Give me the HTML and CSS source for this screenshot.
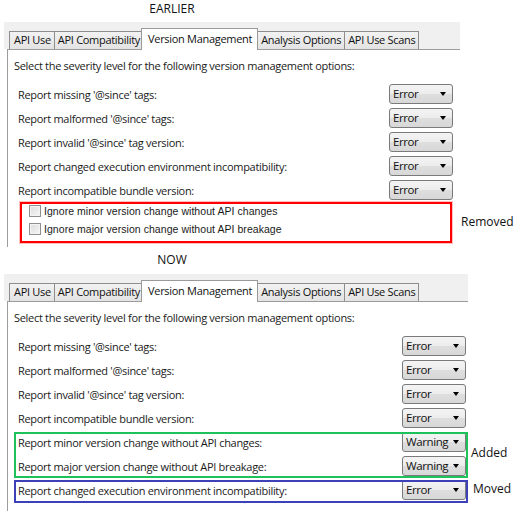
FILE: index.html
```html
<!DOCTYPE html>
<html>
<head>
<meta charset="utf-8">
<link rel="stylesheet" href="styles.css">
</head>
<body>
<div class="caption caption-earlier">EARLIER</div>
<div class="window window-top">
  <div class="tabs">
    <div class="tab">API Use</div>
    <div class="tab">API Compatibility</div>
    <div class="tab selected">Version Management</div>
    <div class="tab">Analysis Options</div>
    <div class="tab">API Use Scans</div>
  </div>
  <div class="panel">
    <div class="intro">Select the severity level for the following version management options:</div>
    <div class="rows">
      <div class="row"><span>Report missing '@since' tags:</span><div class="combo">Error<i></i></div></div>
      <div class="row"><span>Report malformed '@since' tags:</span><div class="combo">Error<i></i></div></div>
      <div class="row"><span>Report invalid '@since' tag version:</span><div class="combo">Error<i></i></div></div>
      <div class="row"><span>Report changed execution environment incompatibility:</span><div class="combo">Error<i></i></div></div>
      <div class="row"><span>Report incompatible bundle version:</span><div class="combo">Error<i></i></div></div>
    </div>
    <div class="checks">
      <label class="check"><span class="box"></span>Ignore minor version change without API changes</label>
      <label class="check"><span class="box"></span>Ignore major version change without API breakage</label>
    </div>
  </div>
  <div class="mark mark-red"></div>
  <div class="note note-removed">Removed</div>
</div>
<div class="caption caption-now">NOW</div>
<div class="window window-bottom">
  <div class="tabs">
    <div class="tab">API Use</div>
    <div class="tab">API Compatibility</div>
    <div class="tab selected">Version Management</div>
    <div class="tab">Analysis Options</div>
    <div class="tab">API Use Scans</div>
  </div>
  <div class="panel">
    <div class="intro">Select the severity level for the following version management options:</div>
    <div class="rows">
      <div class="row"><span>Report missing '@since' tags:</span><div class="combo">Error<i></i></div></div>
      <div class="row"><span>Report malformed '@since' tags:</span><div class="combo">Error<i></i></div></div>
      <div class="row"><span>Report invalid '@since' tag version:</span><div class="combo">Error<i></i></div></div>
      <div class="row"><span>Report incompatible bundle version:</span><div class="combo">Error<i></i></div></div>
      <div class="row"><span>Report minor version change without API changes:</span><div class="combo">Warning<i></i></div></div>
      <div class="row"><span>Report major version change without API breakage:</span><div class="combo">Warning<i></i></div></div>
      <div class="row"><span>Report changed execution environment incompatibility:</span><div class="combo">Error<i></i></div></div>
    </div>
  </div>
  <div class="mark mark-green"></div>
  <div class="mark mark-blue"></div>
  <div class="note note-added">Added</div>
  <div class="note note-moved">Moved</div>
</div>
</body>
</html>
```
FILE: styles.css
```css
html, body {
  margin: 0;
  padding: 0;
  background: #fff;
}
body {
  width: 516px;
  height: 511px;
  overflow: hidden;
  font-family: "Open Sans", "Noto Sans", sans-serif;
  font-size: 11px;
  letter-spacing: -0.3px;
  color: #1a1a1a;
}
.caption {
  width: 344px;
  text-align: center;
  font-size: 12px;
  line-height: 18px;
  letter-spacing: 0;
  color: #111;
}
.caption-earlier {
  height: 22px;
}
.caption-now {
  padding-top: 4px;
  height: 23px;
}
.window {
  position: relative;
  margin-left: 4px;
}
.window-top { width: 456px; }
.window-bottom { width: 464px; }

.tabs {
  display: flex;
  align-items: flex-end;
  height: 27px;
  padding-left: 5px;
  background: #f0f0f0;
  position: relative;
  z-index: 2;
}
.tab {
  height: 17px;
  line-height: 16px;
  padding: 0 3px 0 3px;
  border: 1px solid #8d8d8d;
  border-bottom: none;
  margin-right: -1px;
  background: linear-gradient(#f2f2f2, #e3e3e3);
  font-size: 11px;
  color: #111;
  white-space: nowrap;
}
.tab:first-child {
  padding-left: 4px;
}
.tab.selected {
  height: 21px;
  line-height: 19px;
  padding: 0 5px 0 6px;
  margin: 0 -1px -1px -2px;
  background: #fff;
  border-color: #9a9a9a;
  position: relative;
  z-index: 3;
}

.panel {
  margin-left: 3px;
  border-left: 1px solid #9c9c9c;
  border-top: 1px solid #9c9c9c;
  background: #fff;
  padding: 8px 7px 9px 6px;
  position: relative;
  z-index: 1;
}
.window-bottom .panel {
  padding-right: 2px;
  padding-bottom: 12px;
}
.intro {
  line-height: 16px;
  white-space: nowrap;
}
.rows {
  margin-top: 10px;
  display: flex;
  flex-direction: column;
  gap: 4px;
}
.row {
  display: flex;
  align-items: center;
  justify-content: space-between;
  padding-left: 4px;
  height: 20px;
  white-space: nowrap;
}
.combo {
  position: relative;
  box-sizing: border-box;
  width: 64px;
  height: 20px;
  border: 1px solid #7a7a7a;
  border-radius: 3px;
  background: linear-gradient(#f4f4f4 0%, #ececec 50%, #dedede 51%, #d8d8d8 100%);
  padding-left: 3px;
  line-height: 18px;
  font-size: 11.5px;
  letter-spacing: -0.4px;
  color: #111;
}
.combo i {
  position: absolute;
  right: 6px;
  top: 7px;
  width: 0;
  height: 0;
  border-left: 3.5px solid transparent;
  border-right: 3.5px solid transparent;
  border-top: 4px solid #000;
}

.checks {
  margin-top: 2px;
  padding-left: 15px;
  display: flex;
  flex-direction: column;
}
.check {
  display: flex;
  align-items: center;
  height: 18px;
  font-family: "Liberation Sans", Arial, sans-serif;
  font-size: 10.5px;
  letter-spacing: 0.05px;
  white-space: nowrap;
}
.box {
  box-sizing: border-box;
  width: 12px;
  height: 12px;
  border: 1px solid #8f8f8f;
  background: linear-gradient(135deg, #dcdcdc, #f6f6f6);
  box-shadow: inset 0 0 0 1px #f4f4f4;
  margin-right: 3px;
}

.mark {
  position: absolute;
  box-sizing: border-box;
  z-index: 5;
  pointer-events: none;
}
.mark-red {
  left: 16px;
  top: 180px;
  width: 432px;
  height: 41px;
  border: 2px solid #ff0000;
  box-shadow: 0 0 0 1px rgba(255, 0, 0, 0.25);
}
.mark-green {
  left: 10px;
  top: 158px;
  width: 454px;
  height: 46px;
  border: 2px solid #1ec25a;
}
.mark-blue {
  left: 10px;
  top: 206px;
  width: 454px;
  height: 23px;
  border: 2px solid #3d41b8;
}
.note {
  position: absolute;
  font-size: 12px;
  line-height: 16px;
  letter-spacing: 0;
  color: #111;
  white-space: nowrap;
}
.note-removed { left: 457px; top: 192px; }
.note-added { left: 467px; top: 171px; }
.note-moved { left: 469px; top: 207px; }
```
